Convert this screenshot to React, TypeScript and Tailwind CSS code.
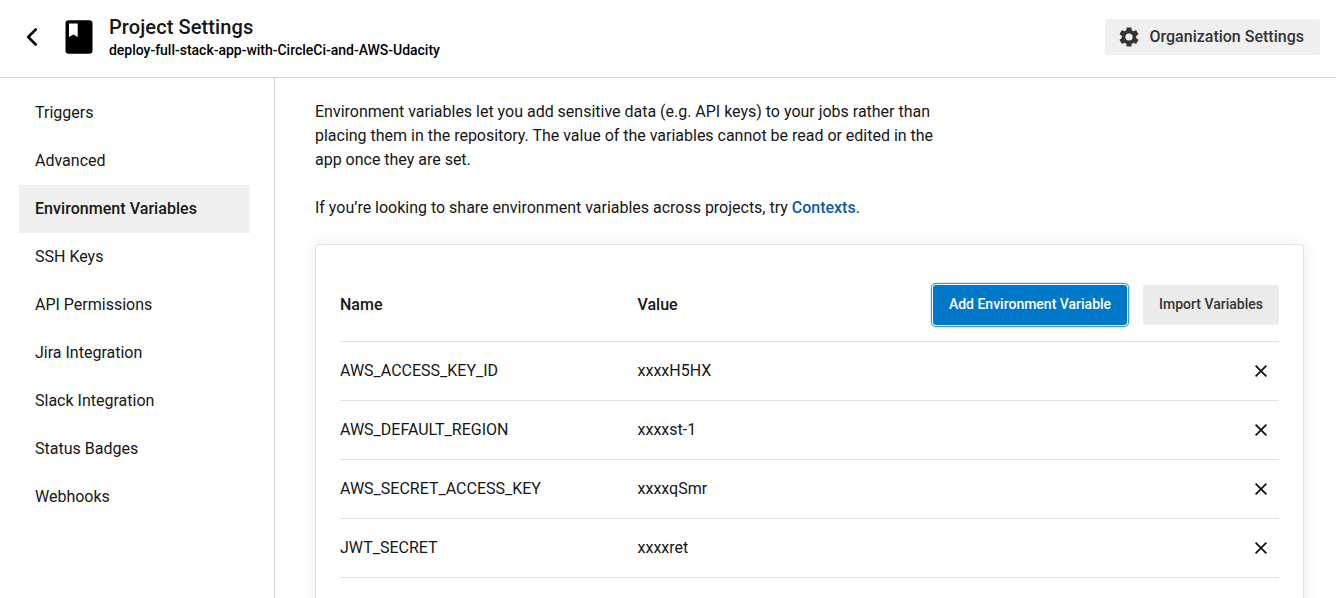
import React from "react";

const navItems = ["Triggers", "Advanced", "Environment Variables", "SSH Keys", "API Permissions", "Jira Integration", "Slack Integration", "Status Badges", "Webhooks"];

const variables = [
  { name: "AWS_ACCESS_KEY_ID", value: "xxxxH5HX" },
  { name: "AWS_DEFAULT_REGION", value: "xxxxst-1" },
  { name: "AWS_SECRET_ACCESS_KEY", value: "xxxxqSmr" },
  { name: "JWT_SECRET", value: "xxxxret" },
];

function Header() {
  return (
    <header className="flex h-[78px] shrink-0 items-start border-b border-[#d3d3d3]">
      <svg className="ml-5 mt-[25px] size-6" viewBox="0 0 24 24" fill="none" stroke="#0a0a0a" strokeWidth="2.6" strokeLinecap="round" strokeLinejoin="round">
        <path d="M15.700 4.500 8.200 12l7.500 7.500" />
      </svg>
      <svg className="ml-[21px] mt-5 h-[34px] w-7" viewBox="0 0 28 34">
        <rect x=".5" y=".2" width="27" height="33.600" rx="3.300" fill="#000" />
        <path d="M4 3.500h8.700V17l-4.350-2.600L4 17z" fill="#fff" />
      </svg>
      <div className="ml-4 mt-[14px]">
        <h1 className="text-[20px] font-medium leading-[26px] tracking-[0.1px]">Project Settings</h1>
        <p className="text-sm font-medium leading-5 tracking-[-0.015px] text-black">deploy-full-stack-app-with-CircleCi-and-AWS-Udacity</p>
      </div>
      <button className="ml-auto mr-4 mt-[19px] flex h-9 w-[215px] items-center rounded-[3px] bg-[#f0f0f0] pl-3 font-medium text-[#343434]">
        <svg className="mr-[8.500px] size-6" viewBox="0 0 24 24" fill="#343434">
          <path d="M19.140 12.940c.04-.3.060-.61.060-.94 0-.32-.02-.64-.07-.94l2.030-1.580c.18-.14.230-.41.120-.61l-1.920-3.320c-.12-.22-.37-.29-.59-.22l-2.390.96c-.5-.38-1.030-.7-1.620-.94l-.36-2.540c-.04-.24-.24-.41-.48-.41h-3.840c-.24 0-.43.17-.47.41l-.36 2.540c-.59.24-1.130.57-1.620.94l-2.390-.96c-.22-.08-.47 0-.59.22L2.740 8.870c-.12.21-.08.47.12.61l2.030 1.580c-.05.3-.09.630-.09.940s.02.640.07.940l-2.030 1.580c-.18.140-.23.410-.12.610l1.920 3.320c.12.220.37.290.59.220l2.390-.96c.5.380 1.030.7 1.620.940l.36 2.540c.05.240.24.410.48.410h3.840c.24 0 .44-.17.470-.41l.36-2.540c.59-.24 1.130-.56 1.620-.94l2.390.960c.22.080.47 0 .59-.22l1.920-3.320c.12-.22.070-.47-.12-.61zM12 15.600A3.600 3.600 0 1 1 12 8.400a3.600 3.600 0 0 1 0 7.200z" />
        </svg>
        <span>Organization Settings</span>
      </button>
    </header>
  );
}

export default function App() {
  return (
    <div className="flex h-[598px] flex-col overflow-hidden bg-white font-['Roboto',sans-serif] text-base text-[#161616]">
      <Header />
      <div className="flex min-h-0 flex-1">
        <nav className="w-[275px] shrink-0 border-r border-[#d3d3d3] pl-[19px] pt-[11px]">
          {navItems.map((item) => (
            <a key={item} className={item === "Environment Variables" ? "flex h-12 w-[231px] items-center bg-[#f0f0f0] pl-4 font-medium tracking-[0.05px]" : "flex h-12 w-[231px] items-center pl-4"}>
              {item}
            </a>
          ))}
        </nav>
        <main className="min-w-0 flex-1 pl-10 pr-8 pt-[22px]">
          <p className="w-[640px] leading-6 tracking-[-0.01px]">
            Environment variables let you add sensitive data (e.g. API keys) to your jobs rather than<br />
            placing them in the repository. The value of the variables cannot be read or edited in the<br />
            app once they are set.
          </p>
          <p className="mt-6 leading-6 tracking-[-0.01px]">
            If you’re looking to share environment variables across projects, try <a className="font-medium text-[#0d5ba5]">Contexts</a>.
          </p>
          <section className="mt-6 h-[420px] rounded-[3px] border border-[#e3e3e3] px-6 pt-6 shadow-[0_0_16px_rgba(0,0,0,0.08)]">
            <div className="flex h-[73px] items-center border-b border-[#e3e3e3] font-medium">
              <span className="w-[297.500px]">Name</span>
              <span>Value</span>
              <button className="ml-auto h-10 w-[194px] rounded-[3px] bg-[#0078ca] pb-0.5 text-sm font-medium text-white shadow-[0_0_0_1px_#fff,0_0_0_2px_#3c99d8,0_0_2px_2px_#78b8e3]">Add Environment Variable</button>
              <button className="ml-4 h-10 w-[136px] rounded-[3px] bg-[#ebebeb] pb-0.5 text-sm font-medium text-[#343434]">Import Variables</button>
            </div>
            {variables.map(({ name, value }) => (
              <div key={name} className="flex h-[59px] items-center border-b border-[#e3e3e3]">
                <span className="w-[297.500px]">{name}</span>
                <span>{value}</span>
                <svg className="ml-auto mr-3 size-3" viewBox="0 0 12 12" stroke="#111" strokeWidth="1.750">
                  <path d="m.6.6 10.800 10.800M11.400.6.6 11.400" />
                </svg>
              </div>
            ))}
          </section>
        </main>
      </div>
    </div>
  );
}
